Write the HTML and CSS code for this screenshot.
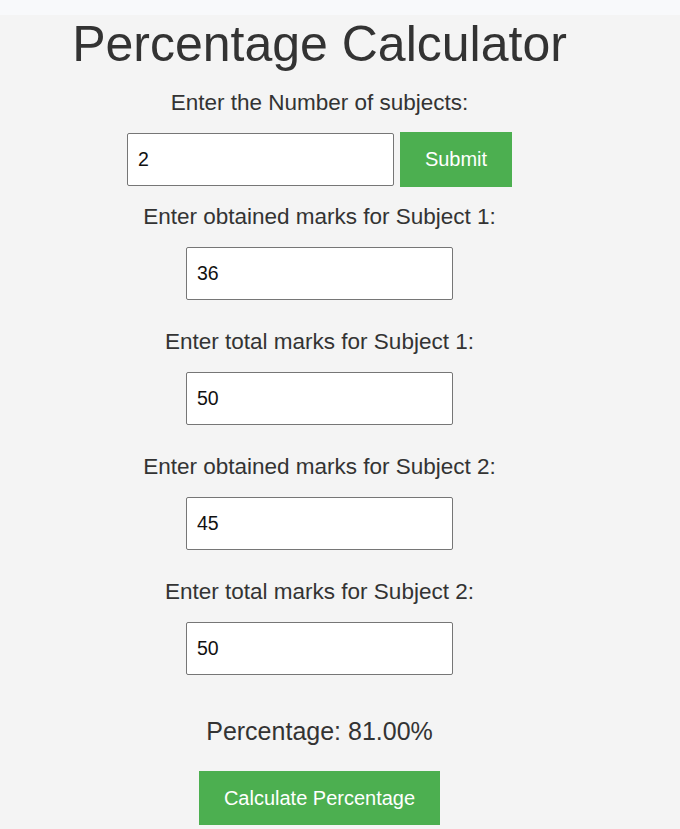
FILE: index.html
```html
<!DOCTYPE html>
<html lang="en">
<head>
<meta charset="utf-8">
<title>Percentage Calculator</title>
<link rel="stylesheet" href="styles.css">
</head>
<body>
<div class="topbar"></div>
<main class="container">
  <h1 class="title">Percentage Calculator</h1>
  <label class="label">Enter the Number of subjects:</label>
  <div class="row">
    <input class="field" type="text" value="2">
    <button class="btn btn-submit">Submit</button>
  </div>
  <label class="label">Enter obtained marks for Subject 1:</label>
  <input class="field" type="text" value="36">
  <label class="label">Enter total marks for Subject 1:</label>
  <input class="field" type="text" value="50">
  <label class="label">Enter obtained marks for Subject 2:</label>
  <input class="field" type="text" value="45">
  <label class="label">Enter total marks for Subject 2:</label>
  <input class="field last" type="text" value="50">
  <p class="result">Percentage: 81.00%</p>
  <button class="btn btn-calc">Calculate Percentage</button>
</main>
</body>
</html>
```
FILE: styles.css
```css
html, body {
  margin: 0;
  padding: 0;
}
body {
  background: #f4f4f4;
  color: #333;
  font-family: "Liberation Sans", Arial, sans-serif;
  height: 829px;
  overflow: hidden;
}
.topbar {
  height: 15px;
  background: #f8f9fb;
}
.container {
  width: 639px;
  display: flex;
  flex-direction: column;
  align-items: center;
}
.title {
  margin: 0;
  font-size: 50px;
  font-weight: normal;
  line-height: 58px;
  color: #333;
}
.label {
  display: block;
  margin-top: 17px;
  font-size: 22.5px;
  line-height: 26px;
}
.row {
  display: flex;
  align-items: center;
  gap: 6px;
  margin-top: 16px;
}
.field {
  box-sizing: border-box;
  width: 267px;
  height: 53px;
  margin: 17px 0 12px;
  padding: 0 10px;
  border: 1px solid #767676;
  border-radius: 2px;
  background: #fff;
  color: #111;
  font-family: "Liberation Sans", Arial, sans-serif;
  font-size: 19.5px;
}
.row .field {
  margin: 0;
}
.field.last {
  margin-bottom: 0;
}
.btn {
  box-sizing: border-box;
  border: none;
  background: #4caf50;
  color: #fff;
  font-family: "Liberation Sans", Arial, sans-serif;
  font-size: 20px;
  padding: 0;
  white-space: nowrap;
  cursor: pointer;
}
.btn-submit {
  width: 112px;
  height: 55px;
}
.result {
  margin: 42px 0 0;
  font-size: 25px;
  line-height: 29px;
}
.btn-calc {
  margin-top: 25px;
  width: 241px;
  height: 54px;
}
```
